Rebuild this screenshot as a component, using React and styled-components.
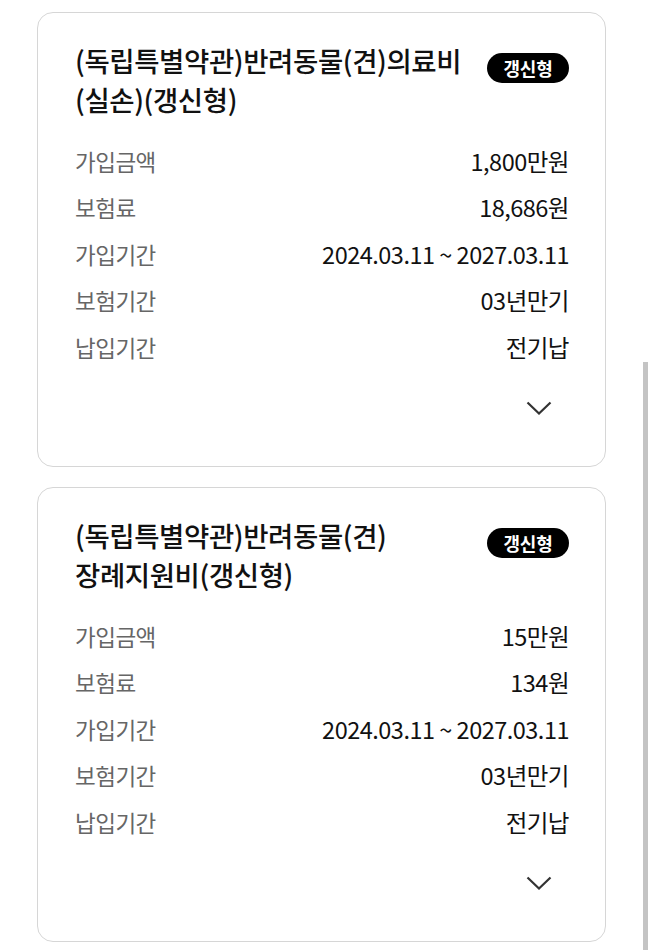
import React from "react";
import styled, { createGlobalStyle } from "styled-components";

const contracts = [
  {
    title: ["(독립특별약관)반려동물(견)의료비", "(실손)(갱신형)"],
    badge: "갱신형",
    rows: [
      ["가입금액", "1,800만원"],
      ["보험료", "18,686원"],
      ["가입기간", "2024.03.11 ~ 2027.03.11"],
      ["보험기간", "03년만기"],
      ["납입기간", "전기납"],
    ],
  },
  {
    title: ["(독립특별약관)반려동물(견)", "장례지원비(갱신형)"],
    badge: "갱신형",
    rows: [
      ["가입금액", "15만원"],
      ["보험료", "134원"],
      ["가입기간", "2024.03.11 ~ 2027.03.11"],
      ["보험기간", "03년만기"],
      ["납입기간", "전기납"],
    ],
  },
];

export default function App() {
  return (
    <>
      <Global />
      <Page>
        {contracts.map((c, i) => (
          <Card key={i}>
            <Head>
              <Title>
                {c.title.map((line) => (
                  <span key={line}>{line}</span>
                ))}
              </Title>
              <Badge>{c.badge}</Badge>
            </Head>
            <Rows>
              {c.rows.map(([label, value]) => (
                <Row key={label}>
                  <Label>{label}</Label>
                  <Value>{value}</Value>
                </Row>
              ))}
            </Rows>
            <Footer>
              <Toggle aria-label="펼치기">
                <svg width="26" height="14" viewBox="0 0 26 14" fill="none">
                  <path d="M1.5 1.5 L13 12.5 L24.5 1.5" stroke="#333" strokeWidth="2.2" />
                </svg>
              </Toggle>
            </Footer>
          </Card>
        ))}
      </Page>
      <Scrollbar />
    </>
  );
}

const Global = createGlobalStyle`
  html, body {
    margin: 0;
    background: #fff;
    font-family: "Noto Sans CJK KR", "Noto Sans", sans-serif;
    color: #111;
  }
`;

const Page = styled.div`
  width: 569px;
  padding: 12px 0 0 37px;
  display: flex;
  flex-direction: column;
  gap: 20px;
`;

const Card = styled.div`
  box-sizing: border-box;
  height: 455px;
  border: 1.5px solid #d6d6d6;
  border-radius: 16px;
  padding: 28px 36px 0 37px;
  display: flex;
  flex-direction: column;
`;

const Head = styled.div`
  display: flex;
  align-items: flex-start;
  justify-content: space-between;
  gap: 16px;
`;

const Title = styled.h2`
  margin: 0;
  font-size: 27.5px;
  font-weight: 500;
  line-height: 39px;
  letter-spacing: -0.4px;
  color: #111;
  span {
    display: block;
    white-space: nowrap;
  }
`;

const Badge = styled.span`
  flex: none;
  margin-top: 11.5px;
  width: 82px;
  height: 30px;
  border-radius: 15px;
  background: #000;
  color: #fff;
  font-size: 18px;
  font-weight: 700;
  display: flex;
  align-items: center;
  justify-content: center;
  letter-spacing: -0.3px;
`;

const Rows = styled.div`
  margin-top: 26.5px;
  display: flex;
  flex-direction: column;
  gap: 16.5px;
`;

const Row = styled.div`
  display: flex;
  justify-content: space-between;
  align-items: center;
  height: 30px;
  letter-spacing: -0.5px;
`;

const Label = styled.span`
  font-size: 22.5px;
  color: #666;
`;

const Value = styled.span`
  font-size: 23.5px;
  color: #111;
`;

const Footer = styled.div`
  display: flex;
  justify-content: flex-end;
  margin-top: 34px;
`;

const Toggle = styled.button`
  width: 60px;
  height: 24px;
  border: 0;
  padding: 0;
  background: none;
  display: flex;
  align-items: center;
  justify-content: center;
  cursor: pointer;
`;

const Scrollbar = styled.div`
  position: fixed;
  right: 0;
  top: 362px;
  bottom: 0;
  width: 5px;
  background: #c4c4c4;
`;
